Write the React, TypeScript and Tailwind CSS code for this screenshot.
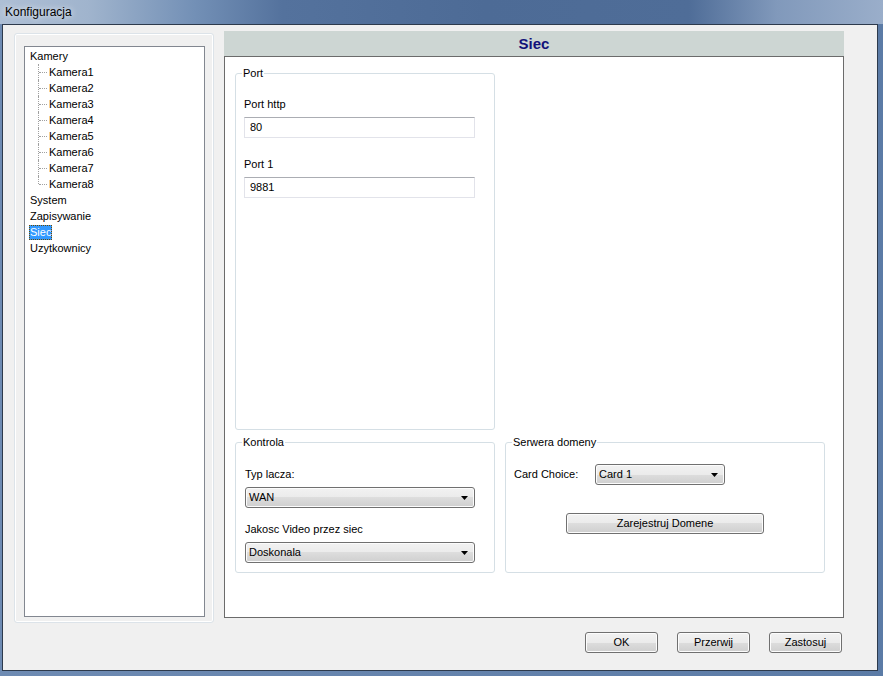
import React from "react";

const cameras = ["Kamera1", "Kamera2", "Kamera3", "Kamera4", "Kamera5", "Kamera6", "Kamera7", "Kamera8"];

function WinButton({ label, className = "" }: { label: string; className?: string }) {
    return (
        <button
            className={`h-[21px] rounded-[3px] border border-[#707070] bg-[linear-gradient(#f2f2f2_0%,#ebebeb_50%,#dddddd_50%,#cfcfcf_100%)] shadow-[inset_0_0_0_1px_#fcfcfc] text-[11px] leading-[13px] text-black ${className}`}
        >
            {label}
        </button>
    );
}

function Combo({ value, className = "" }: { value: string; className?: string }) {
    return (
        <div
            className={`h-[21px] flex items-center justify-between rounded-[3px] border border-[#707070] bg-[linear-gradient(#f2f2f2_0%,#ebebeb_50%,#dddddd_50%,#cfcfcf_100%)] shadow-[inset_0_0_0_1px_#fcfcfc] pl-[3px] pr-[6px] text-[11px] leading-[13px] ${className}`}
        >
            <span>{value}</span>
            <svg width="7" height="4" viewBox="0 0 7 4">
                <path d="M0 0h7L3.5 4z" fill="#000" />
            </svg>
        </div>
    );
}

function TextBox({ value }: { value: string }) {
    return (
        <div className="h-[21px] w-[231px] flex items-center bg-white border border-[#e2e3ea] border-t-[#abadb3] pl-[5px] text-[11px] leading-[13px]">
            {value}
        </div>
    );
}

function Group({ title, className = "", bodyClass = "", children }: { title: string; className?: string; bodyClass?: string; children?: React.ReactNode }) {
    return (
        <fieldset className={`border border-[#d5dfe5] rounded-[3px] shadow-[inset_0_0_0_1px_#ffffff] ${className}`}>
            <legend className="ml-[6px] px-[1px] text-[11px] leading-[13px]">{title}</legend>
            <div className={bodyClass}>{children}</div>
        </fieldset>
    );
}

function TreeChild({ name, last }: { name: string; last: boolean }) {
    return (
        <div className="flex h-4 items-center pl-[8px]">
            <span className="relative h-4 w-[11px] shrink-0">
                <span className={`absolute left-0 top-0 border-l border-dotted border-[#a0a0a0] ${last ? "h-[8px]" : "h-4"}`} />
                <span className="absolute left-[1px] top-[8px] w-[8px] border-t border-dotted border-[#a0a0a0]" />
            </span>
            <span>{name}</span>
        </div>
    );
}

export default function App() {
    return (
        <div className="w-[883px] h-[676px] flex flex-col bg-[#5777a3] font-['Liberation_Sans',Arial,sans-serif] text-black overflow-hidden">
            {/* Title bar */}
            <div className="h-[24px] shrink-0 flex items-center pl-[5px] bg-[linear-gradient(90deg,#aebfd5_0%,#a0b4cd_10%,#7390b6_22%,#54729d_32%,#4d6b96_55%,#4f6d98_78%,#8199bb_88%,#9aaeca_100%)]">
                <span className="text-[12px] leading-[14px] text-black [text-shadow:0_0_6px_#ffffff]">Konfiguracja</span>
            </div>

            <div className="flex-1 flex bg-[linear-gradient(90deg,#6e8bb3,#5b7ba6)] pl-[2px] pr-[5px] pb-[5px]">
                {/* Client area */}
                <div className="flex-1 min-w-0 flex flex-col border border-[#2d3a4c] bg-[#f0f0f0] pl-[11px] pr-[33px] pt-[6px]">
                    <div className="flex items-start gap-[10px]">
                        {/* Left tree group */}
                        <div className="mt-[2px] w-[200px] h-[590px] shrink-0 rounded-[3px] border border-[#dce3e9] shadow-[inset_0_0_0_1px_#ffffff] pl-[9px] pr-[8px] pt-[12px] pb-[5px]">
                            <div className="h-full bg-white border border-[#828790] pt-[1px] pl-[5px] text-[11px] leading-[13px]">
                                <div className="h-4 flex items-center">Kamery</div>
                                {cameras.map((c, i) => (
                                    <TreeChild key={c} name={c} last={i === cameras.length - 1} />
                                ))}
                                <div className="h-4 flex items-center">System</div>
                                <div className="h-4 flex items-center">Zapisywanie</div>
                                <div className="h-4 flex items-center">
                                    <span className="-ml-[1px] px-[1px] h-[15px] flex items-center bg-[#3399ff] text-white outline-1 outline-dotted outline-[#6b4a00] -outline-offset-1">
                                        Siec
                                    </span>
                                </div>
                                <div className="h-4 flex items-center">Uzytkownicy</div>
                            </div>
                        </div>

                        {/* Right panel */}
                        <div className="w-[620px] shrink-0 flex flex-col">
                            <div className="h-[25px] bg-[#cdd6d3] flex items-center justify-center">
                                <span className="text-[15px] leading-[17px] font-bold text-[#12127a]">Siec</span>
                            </div>
                            <div className="h-[562px] bg-white border border-[#6b6b6b] pl-[10px] pt-[10px]">
                                <Group title="Port" className="w-[260px] h-[363px]" bodyClass="pl-[8px]">
                                    <div className="mt-[18px] text-[11px] leading-[13px]">Port http</div>
                                    <div className="mt-[6px]">
                                        <TextBox value="80" />
                                    </div>
                                    <div className="mt-[20px] text-[11px] leading-[13px]">Port 1</div>
                                    <div className="mt-[6px]">
                                        <TextBox value="9881" />
                                    </div>
                                </Group>

                                <div className="flex gap-[10px] mt-[6px]">
                                    <Group title="Kontrola" className="w-[260px] h-[137px]" bodyClass="pl-[9px]">
                                        <div className="mt-[19px] text-[11px] leading-[13px]">Typ lacza:</div>
                                        <Combo value="WAN" className="mt-[6px] w-[230px]" />
                                        <div className="mt-[15px] text-[11px] leading-[13px]">Jakosc Video przez siec</div>
                                        <Combo value="Doskonala" className="mt-[6px] w-[230px]" />
                                    </Group>

                                    <Group title="Serwera domeny" className="w-[320px] h-[137px]" bodyClass="pl-[8px]">
                                        <div className="mt-[15px] flex items-center">
                                            <span className="w-[81px] text-[11px] leading-[13px]">Card Choice:</span>
                                            <Combo value="Card 1" className="w-[130px]" />
                                        </div>
                                        <div className="mt-[28px] flex justify-center pr-[8px]">
                                            <WinButton label="Zarejestruj Domene" className="w-[198px]" />
                                        </div>
                                    </Group>
                                </div>
                            </div>
                        </div>
                    </div>

                    {/* Dialog buttons */}
                    <div className="mt-[9px] pr-[2px] flex justify-end gap-[19px]">
                        <WinButton label="OK" className="w-[73px]" />
                        <WinButton label="Przerwij" className="w-[73px]" />
                        <WinButton label="Zastosuj" className="w-[73px]" />
                    </div>
                </div>
            </div>
        </div>
    );
}
